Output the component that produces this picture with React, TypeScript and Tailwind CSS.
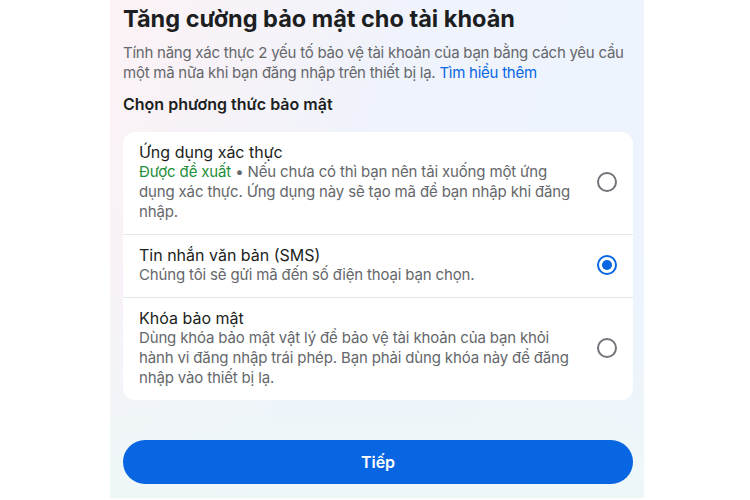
const FONT = { fontFamily: 'Inter, "Noto Sans", sans-serif' };

type Option = {
  id: string;
  title: string;
  badge?: string;
  desc: string;
};

const OPTIONS: Option[] = [
  {
    id: 'app',
    title: 'Ứng dụng xác thực',
    badge: 'Được đề xuất',
    desc: ' • Nếu chưa có thì bạn nên tải xuống một ứng dụng xác thực. Ứng dụng này sẽ tạo mã để bạn nhập khi đăng nhập.',
  },
  {
    id: 'sms',
    title: 'Tin nhắn văn bản (SMS)',
    desc: 'Chúng tôi sẽ gửi mã đến số điện thoại bạn chọn.',
  },
  {
    id: 'key',
    title: 'Khóa bảo mật',
    desc: 'Dùng khóa bảo mật vật lý để bảo vệ tài khoản của bạn khỏi hành vi đăng nhập trái phép. Bạn phải dùng khóa này để đăng nhập vào thiết bị lạ.',
  },
];

function Radio({ checked }: { checked: boolean }) {
  if (checked) {
    return (
      <span className="w-[20px] h-[20px] rounded-full border-2 border-[#0866e3] flex items-center justify-center shrink-0">
        <span className="w-[10px] h-[10px] rounded-full bg-[#0866e3]" />
      </span>
    );
  }
  return <span className="w-[20px] h-[20px] rounded-full border-2 border-[#727479] shrink-0" />;
}

export default function App() {
  const selected = 'sms';

  return (
    <div className="w-[750px] h-[500px] bg-white pl-[110px]" style={FONT}>
      <div className="w-[534px] h-[498px] pl-[13px] pr-[11px] pt-[4px] bg-[linear-gradient(110deg,#fcf2f5_0%,#eff3fc_45%,#ecf4fd_100%)] relative overflow-hidden">
        <div className="absolute inset-x-0 bottom-0 h-[200px] bg-[linear-gradient(180deg,rgba(238,247,248,0)_0%,#eef7f8_100%)] pointer-events-none" />
        <div className="relative">
          {/* Tiêu đề */}
          <h1 className="text-[23.5px] leading-[30px] font-bold text-[#1c1e21]">
            Tăng cường bảo mật cho tài khoản
          </h1>
          <p className="mt-[9px] text-[15px] leading-[20px] tracking-[-0.25px] text-[#65676b]">
            Tính năng xác thực 2 yếu tố bảo vệ tài khoản của bạn bằng cách yêu cầu một mã nữa khi bạn đăng nhập trên thiết bị lạ.{' '}
            <span className="text-[#0866e3]">Tìm hiểu thêm</span>
          </p>
          <h2 className="mt-[10px] text-[16px] leading-[22px] font-semibold text-[#1c1e21]">
            Chọn phương thức bảo mật
          </h2>

          {/* Danh sách phương thức */}
          <div className="mt-[17px] bg-white rounded-[12px] overflow-hidden">
            {OPTIONS.map((o, i) => (
              <div
                key={o.id}
                className={`flex items-center gap-[14px] px-[16px] pt-[10px] pb-[12px] ${i > 0 ? 'border-t border-[#e4e6eb]' : ''}`}
              >
                <div className="flex-1 min-w-0">
                  <div className="text-[16px] leading-[20px] text-[#1c1e21]">{o.title}</div>
                  <div className="text-[15px] leading-[20px] tracking-[-0.15px] text-[#65676b]">
                    {o.badge && <span className="text-[#1d8f3a]">{o.badge}</span>}
                    {o.desc}
                  </div>
                </div>
                <Radio checked={o.id === selected} />
              </div>
            ))}
          </div>

          <button className="mt-[40px] w-full h-[44px] rounded-full bg-[#0866e3] text-white text-[16px] font-semibold">
            Tiếp
          </button>
        </div>
      </div>
    </div>
  );
}
